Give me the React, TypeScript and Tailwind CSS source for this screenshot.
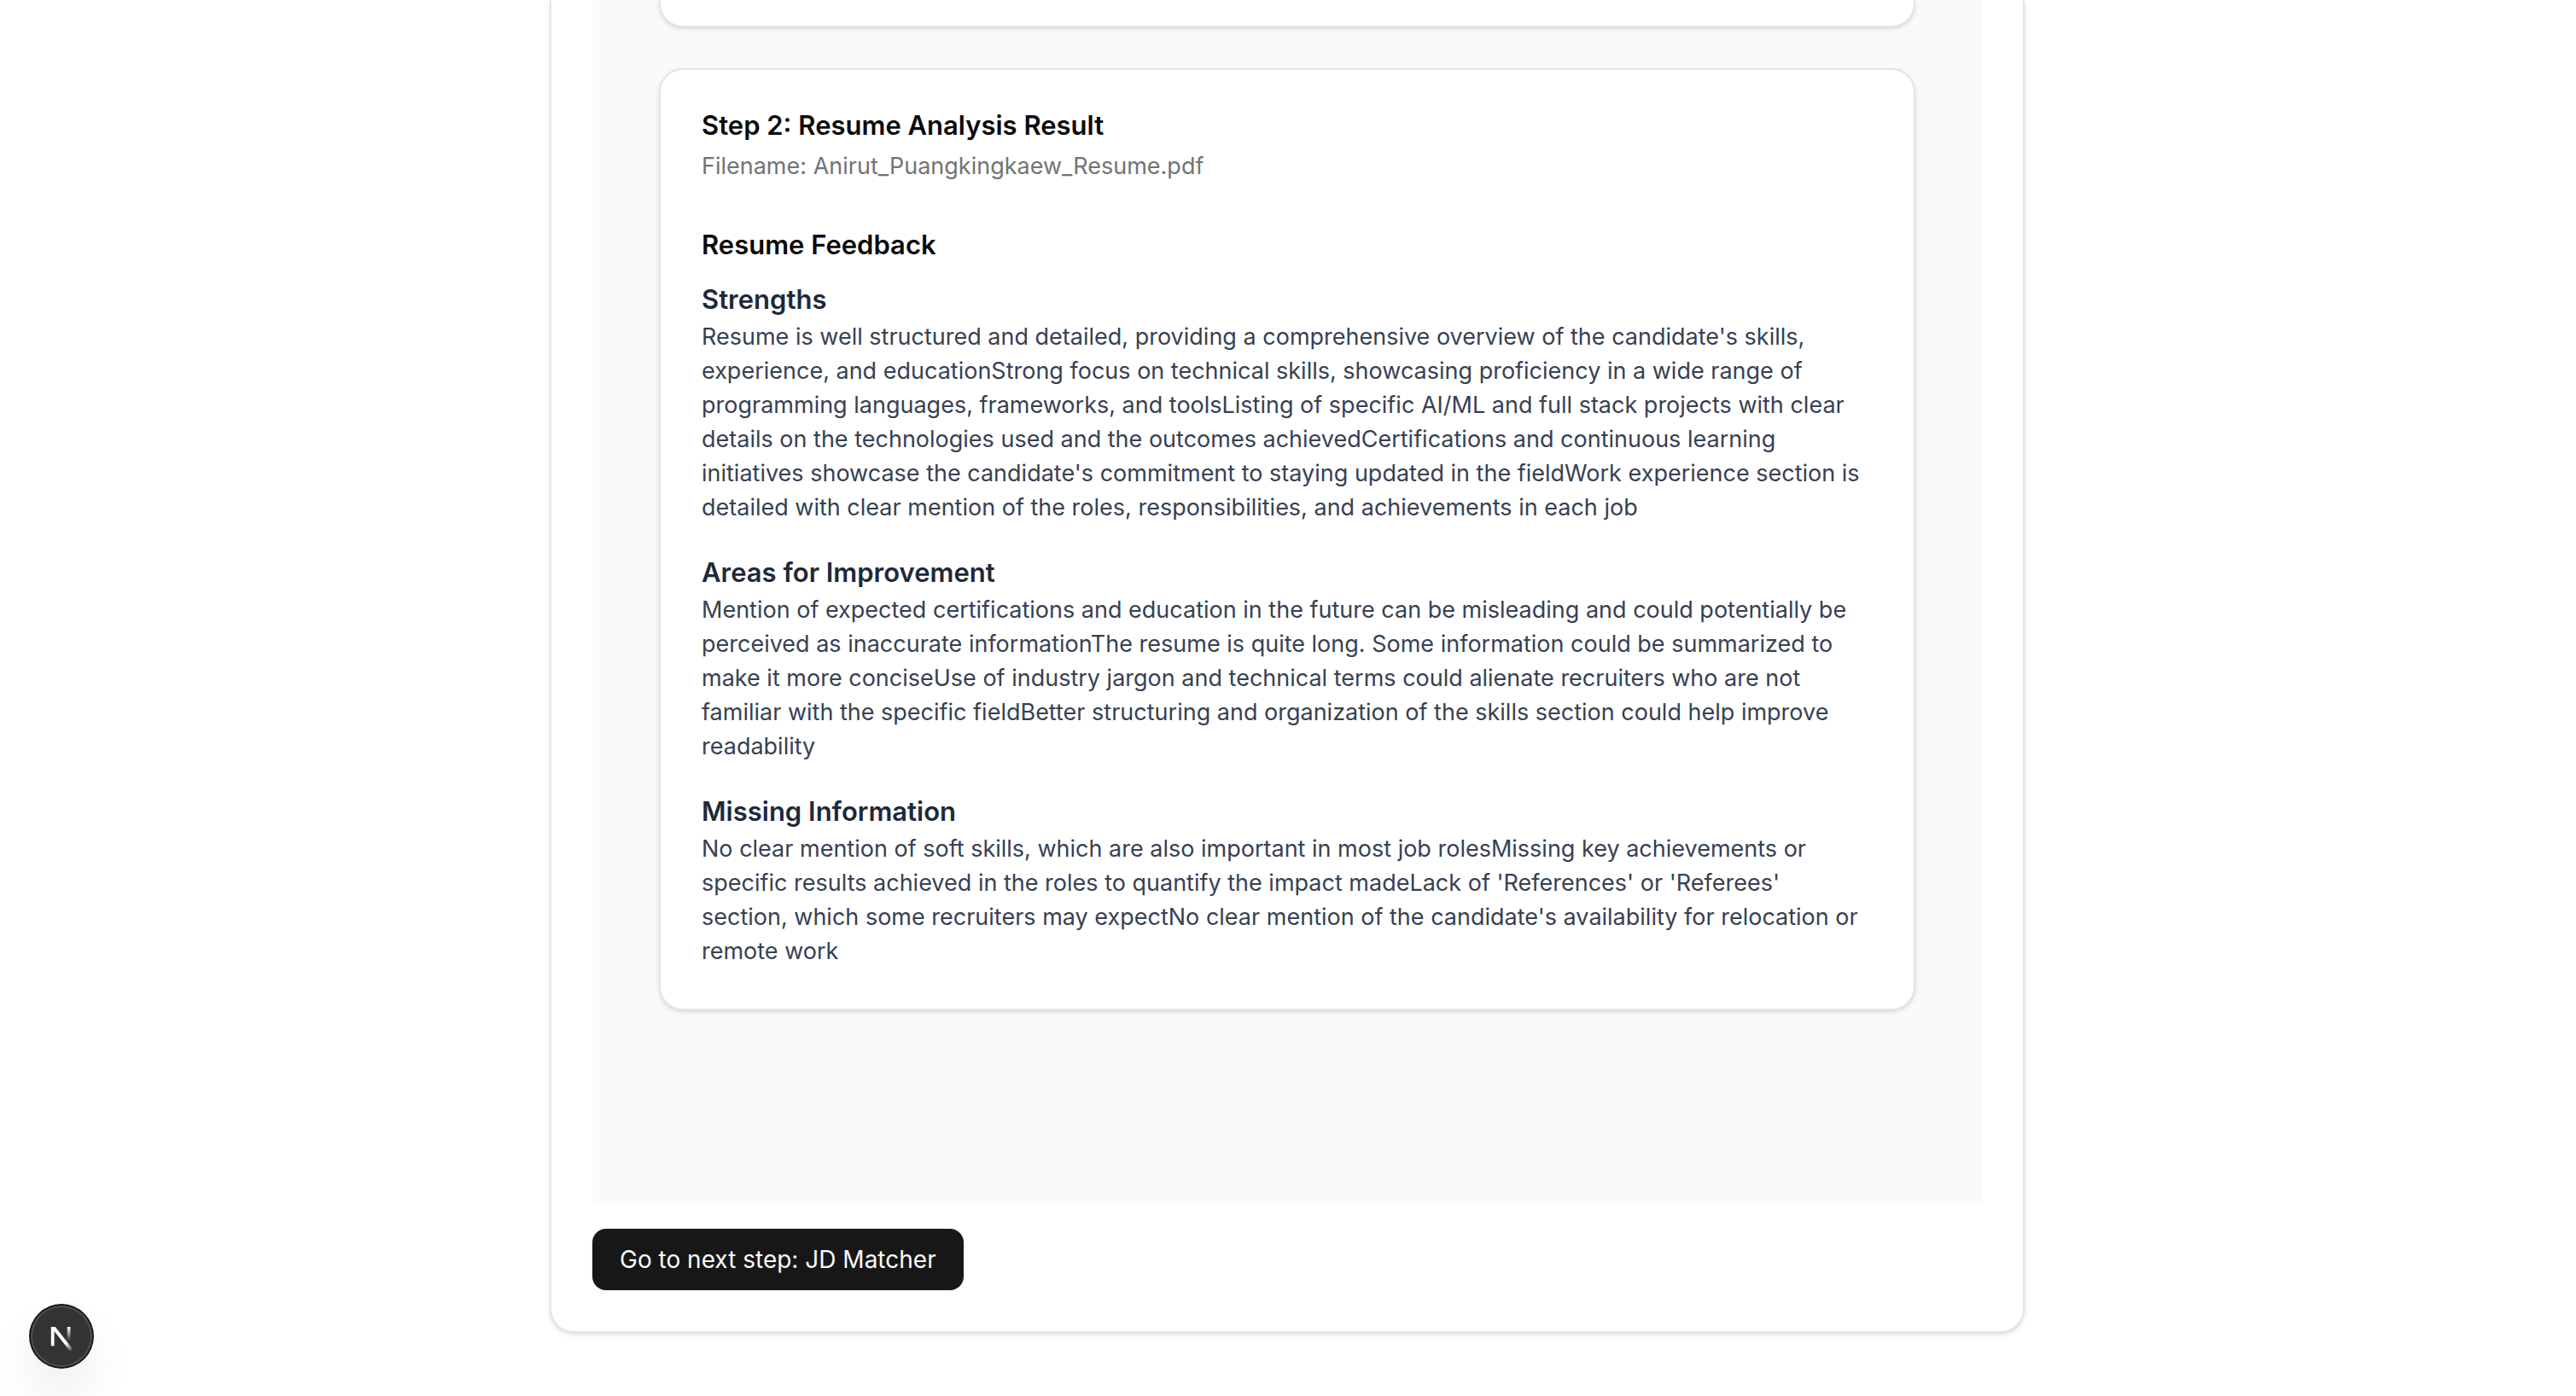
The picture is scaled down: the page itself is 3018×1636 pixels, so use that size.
const sections: { title: string; lines: string[] }[] = [
  {
    title: "Strengths",
    lines: [
      "Resume is well structured and detailed, providing a comprehensive overview of the candidate's skills,",
      "experience, and educationStrong focus on technical skills, showcasing proficiency in a wide range of",
      "programming languages, frameworks, and toolsListing of specific AI/ML and full stack projects with clear",
      "details on the technologies used and the outcomes achievedCertifications and continuous learning",
      "initiatives showcase the candidate's commitment to staying updated in the fieldWork experience section is",
      "detailed with clear mention of the roles, responsibilities, and achievements in each job",
    ],
  },
  {
    title: "Areas for Improvement",
    lines: [
      "Mention of expected certifications and education in the future can be misleading and could potentially be",
      "perceived as inaccurate informationThe resume is quite long. Some information could be summarized to",
      "make it more conciseUse of industry jargon and technical terms could alienate recruiters who are not",
      "familiar with the specific fieldBetter structuring and organization of the skills section could help improve",
      "readability",
    ],
  },
  {
    title: "Missing Information",
    lines: [
      "No clear mention of soft skills, which are also important in most job rolesMissing key achievements or",
      "specific results achieved in the roles to quantify the impact madeLack of 'References' or 'Referees'",
      "section, which some recruiters may expectNo clear mention of the candidate's availability for relocation or",
      "remote work",
    ],
  },
];

function DevToolsBadge() {
  return (
    <button
      type="button"
      aria-label="Open Next.js Dev Tools"
      className="fixed bottom-[34px] left-9 size-18 rounded-full bg-[#333333] shadow-[0_0_0_2px_#171717,inset_0_0_0_2px_rgba(255,255,255,0.14),0_32px_64px_-16px_rgba(0,0,0,0.24)]"
    >
      <svg viewBox="-10.5 -11 36 36" fill="none" className="size-18" aria-hidden="true">
        <defs>
          <linearGradient id="diagonal" x1="9.95" y1="11.13" x2="13.8" y2="16" gradientUnits="userSpaceOnUse">
            <stop stopColor="white" />
            <stop offset="0.6" stopColor="white" stopOpacity="0.4" />
            <stop offset="1" stopColor="white" stopOpacity="0" />
          </linearGradient>
          <linearGradient id="stem" x1="11.82" y1="1.5" x2="11.78" y2="9.6" gradientUnits="userSpaceOnUse">
            <stop stopColor="white" />
            <stop offset="1" stopColor="white" stopOpacity="0" />
          </linearGradient>
        </defs>
        <path d="M1.41 1.5H3.9L14.2 14.65L12.6 15.9L3.27 4V12.6H1.41Z" fill="url(#diagonal)" />
        <path d="M11.825 1.5V13.1" stroke="url(#stem)" strokeWidth="1.86" />
      </svg>
    </button>
  );
}

export default function App() {
  return (
    <div className="min-h-screen bg-white pr-0.5 pb-18 font-['Inter',sans-serif] text-[27px] leading-10 text-[#0a0a0a]">
      <main className="mx-auto max-w-[1728px] rounded-b-[28px] border-x-2 border-b-2 border-[#e5e5e5] bg-white px-12 pb-12 shadow-[0_2px_6px_rgba(0,0,0,0.1),0_2px_4px_-2px_rgba(0,0,0,0.1)]">
        <div className="bg-gray-50 pb-56">
          <div className="mx-auto flex max-w-[1472px] flex-col gap-12">
            <div className="h-8 rounded-b-[28px] border-x-2 border-b-2 border-[#e5e5e5] bg-white shadow-[0_2px_6px_rgba(0,0,0,0.1),0_2px_4px_-2px_rgba(0,0,0,0.1)]" />
            <section className="rounded-[28px] border-2 border-[#e5e5e5] bg-white px-12 pt-[49px] pb-[47px] shadow-[0_2px_6px_rgba(0,0,0,0.1),0_2px_4px_-2px_rgba(0,0,0,0.1)]">
              <header className="mb-12 flex flex-col gap-3">
                <h2 className="text-[31px] leading-8 font-semibold">Step 2: Resume Analysis Result</h2>
                <p className="text-[#737373]">Filename: Anirut_Puangkingkaew_Resume.pdf</p>
              </header>
              <h3 className="mb-4 text-[31px] leading-12 font-semibold">Resume Feedback</h3>
              <div className="flex flex-col gap-8">
                {sections.map((section) => (
                  <article key={section.title}>
                    <h4 className="text-[31px] leading-12 font-semibold text-gray-800">{section.title}</h4>
                    <p className="text-gray-700">
                      {section.lines.map((line) => (
                        <span key={line} className="block">
                          {line}
                        </span>
                      ))}
                    </p>
                  </article>
                ))}
              </div>
            </section>
          </div>
        </div>
        <button
          type="button"
          className="mt-8 flex h-18 items-center rounded-2xl bg-[#171717] px-8 text-[28px] text-[#fafafa] shadow-[0_2px_4px_rgba(0,0,0,0.05)]"
        >
          Go to next step: JD Matcher
        </button>
      </main>
      <DevToolsBadge />
    </div>
  );
}
